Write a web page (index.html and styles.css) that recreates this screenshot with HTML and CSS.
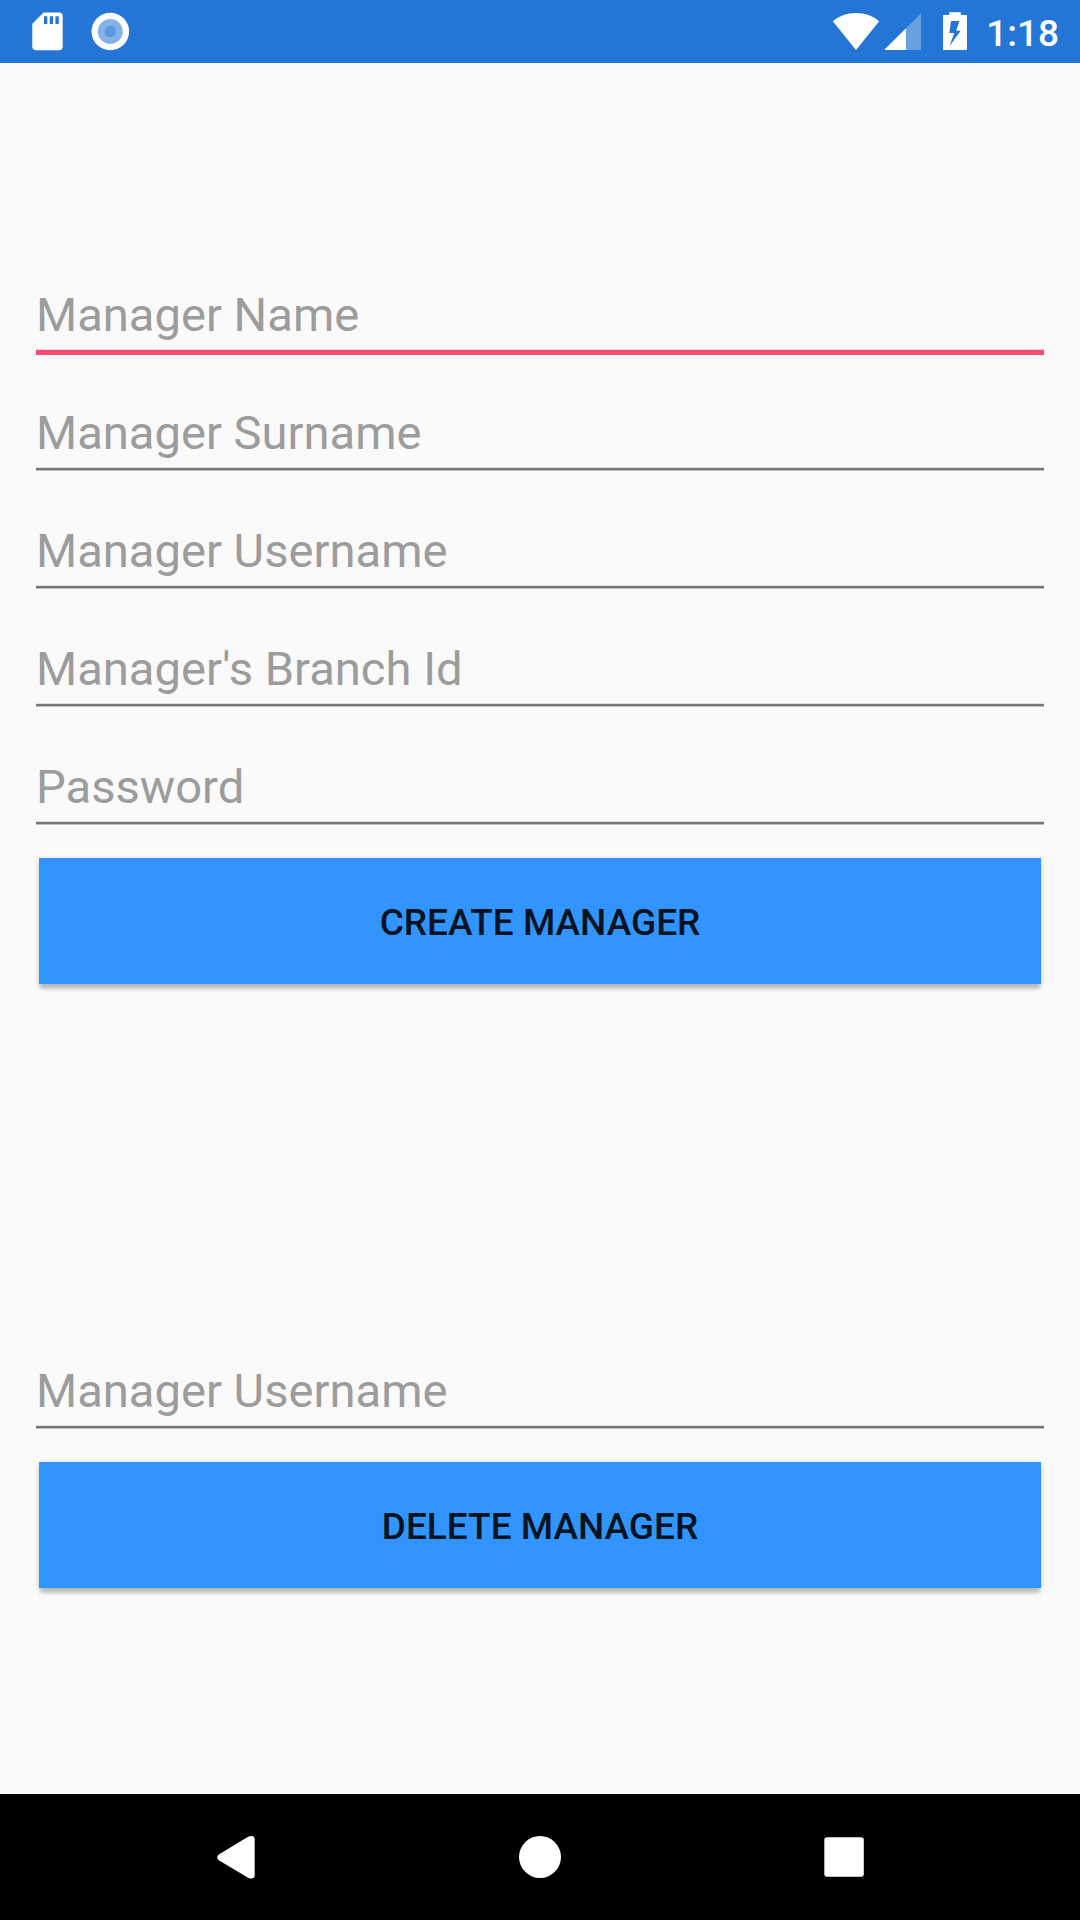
FILE: index.html
```html
<!DOCTYPE html>
<html lang="en">
<head>
<meta charset="utf-8">
<title>Managers</title>
<link rel="stylesheet" href="styles.css">
</head>
<body>
<div class="screen">
  <header class="status-bar">
    <svg class="status-icons" width="160" height="63" viewBox="0 0 160 63">
      <path fill="#fff" fill-rule="evenodd" d="M43.5 12.6H59a3.7 3.7 0 0 1 3.7 3.7v30.3a3.7 3.7 0 0 1-3.7 3.7H36a3.7 3.7 0 0 1-3.7-3.7V23.8ZM44 16.3V24h3.3v-7.7ZM49.8 16.3V24h3.3v-7.7ZM55.4 16.3V24h3.4v-7.7Z"/>
      <circle cx="110.3" cy="31.5" r="18.8" fill="#fff"/>
      <circle cx="110.3" cy="31.5" r="12.5" fill="#84b2e8"/>
      <circle cx="110.3" cy="31.5" r="5.7" fill="#5b99e0"/>
    </svg>
    <div class="status-right">
      <svg class="status-icons" width="148" height="63" viewBox="820 0 148 63">
        <path fill="#fff" d="M856 50 832.8 21.2Q842.5 13 856 13T879.2 21.2Z"/>
        <path fill="#68a1e1" d="M921 13.2V50H884.2Z"/>
        <path fill="#fff" d="M906 28.2V50H884.2Z"/>
        <path fill="#fff" fill-rule="evenodd" d="M949.2 12.2h11.6v2.9h6.2v34.9h-24V15.1h6.2ZM951 21.1 949.4 33h4.800l-4.600 13L960.700 30.700h-4.500l3.200-9.600Z"/>
      </svg>
      <span class="clock">1:18</span>
    </div>
  </header>

  <main class="content">
    <form class="form">
      <div class="field field-focused"><span class="hint">Manager Name</span><span class="rule"></span></div>
      <div class="field"><span class="hint">Manager Surname</span><span class="rule"></span></div>
      <div class="field"><span class="hint">Manager Username</span><span class="rule"></span></div>
      <div class="field"><span class="hint">Manager's Branch Id</span><span class="rule"></span></div>
      <div class="field"><span class="hint">Password</span><span class="rule"></span></div>
      <button class="action" type="button">CREATE MANAGER</button>
    </form>
    <form class="form">
      <div class="field"><span class="hint">Manager Username</span><span class="rule"></span></div>
      <button class="action" type="button">DELETE MANAGER</button>
    </form>
  </main>

  <nav class="nav-bar">
    <svg width="60" height="60" viewBox="0 0 60 60"><path fill="#fff" d="M12.800 27.400 42.500 9.600Q48.700 7.500 48.700 12.500V48Q48.700 53 42.500 50.900L12.800 33.200Q9.500 30.300 12.800 27.400Z"/></svg>
    <svg width="60" height="60" viewBox="0 0 60 60"><circle cx="30" cy="30" r="21" fill="#fff"/></svg>
    <svg width="60" height="60" viewBox="0 0 60 60"><rect x="10.300" y="10.300" width="39.500" height="39.500" rx="2.800" fill="#fff"/></svg>
  </nav>
</div>
</body>
</html>
```
FILE: styles.css
```css
* {
  box-sizing: border-box;
}

body {
  margin: 0;
  font-family: Roboto, sans-serif;
  background: #fafafa;
}

.screen {
  display: flex;
  flex-direction: column;
  width: 1080px;
  height: 1920px;
  overflow: hidden;
}

.status-bar {
  display: flex;
  justify-content: space-between;
  height: 63px;
  padding-right: 21px;
  background: #2476d6;
}

.status-icons {
  display: block;
}

.status-right {
  display: flex;
  gap: 18px;
}

.clock {
  padding-top: 12px;
  font-size: 37px;
  font-weight: 500;
  line-height: 44px;
  color: #fff;
}

.content {
  display: flex;
  flex: 1;
  flex-direction: column;
  gap: 360px;
  padding: 205px 36px 0;
}

.form {
  display: flex;
  flex-direction: column;
}

.field {
  display: flex;
  flex-direction: column;
  gap: 6px;
  height: 118px;
  padding-top: 19px;
}

.hint {
  height: 56px;
  font-size: 47.15px;
  line-height: 56px;
  color: #9c9c9c;
}

.rule {
  height: 4px;
  background: linear-gradient(#dedede 1px, #757575 1px 3px, #c0c0c0 3px);
}

.field-focused .rule {
  height: 6px;
  background: linear-gradient(#fbd0da 1px, #f84b72 1px);
}

.action {
  height: 126px;
  margin: 0 3px;
  padding: 4px 0 0;
  border: 0;
  background: #3295ff;
  box-shadow: 0 6px 4px -1px rgba(0, 0, 0, 0.2), 0 1px 6px rgba(0, 0, 0, 0.14);
  font-family: inherit;
  font-size: 37px;
  font-weight: 500;
  line-height: 44px;
  color: #061320;
}

.nav-bar {
  display: grid;
  grid-template-columns: repeat(3, 304px);
  place-content: center;
  place-items: center;
  height: 126px;
  background: #000;
}
```
